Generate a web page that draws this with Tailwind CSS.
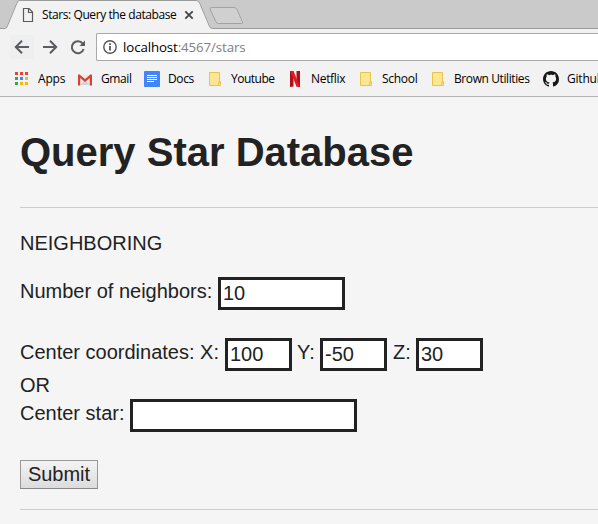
<!DOCTYPE html>
<html lang="en">
<head>
<meta charset="utf-8">
<title>Stars: Query the database</title>
<script src="https://cdn.jsdelivr.net/npm/@tailwindcss/browser@4"></script>
</head>
<body class="w-[598px] h-[524px] overflow-hidden bg-[#f5f5f5] text-[#222] font-['Liberation_Sans',Arial,sans-serif]">
<header class="relative h-[97px] bg-[#f2f2f2] border-b border-[#b6b4b6] text-xs text-black font-['Open_Sans','Noto_Sans',sans-serif]">
  <div class="relative h-[29px] bg-[#cacaca]">
    <svg class="absolute inset-0" width="598" height="29" viewBox="0 0 598 29" fill="none">
      <path d="M0 28.5H5Q6.5 28.5 7.3 26.5L17 3Q18 .5 20 .5H196Q198.500 .5 199.500 3L209 25.500Q210.300 28.500 212.500 28.500H598" stroke="#9b9b9b"/>
      <path d="M5 29Q7 28.500 7.800 26.500L17.500 3Q18.200 1 20 1H196Q198.200 1 199 3L208.500 25.500Q210 29 212 29Z" fill="#f2f2f2"/>
      <path d="M211.500 7.500H234Q236 7.500 237 9.500L242.500 22Q243 23.500 241.500 23.500H218.500Q216.500 23.500 215.700 21.500L210 9Q209.500 7.500 211.500 7.500Z" fill="#d0d0d0" stroke="#a3a3a3"/>
      <path d="M23.500 8.500H29L32.500 12V21.500H23.500ZM28.500 8.500V12.500H32.500" stroke="#5a5a5a" stroke-width="1.200"/>
      <path d="M185.300 11.300L192.700 18.700M192.700 11.300L185.300 18.700" stroke="#444" stroke-width="1.800"/>
    </svg>
    <div class="relative flex pl-[42px] pt-[6px] leading-[18px] whitespace-nowrap tracking-[-0.42px]">Stars: Query the database</div>
  </div>
  <div class="flex h-[36px] pt-[4px]">
    <div class="w-[96px] shrink-0">
      <svg width="96" height="28" viewBox="0 0 96 28" fill="none" stroke="#5a5d60" stroke-width="2">
        <rect x="10" y="2" width="24" height="24" rx="2" fill="#efefef" stroke="none"/>
        <path d="M29 14H16.500M22 7.800L15.800 14L22 20.200M43 14H55.500M50 7.800L56.200 14L50 20.200"/>
        <path d="M82.700 10.700A6 6 0 1 0 83.600 16"/>
        <path d="M85 7.500V13H79.500Z" fill="#5a5d60" stroke="none"/>
      </svg>
    </div>
    <div class="flex flex-1 h-[28px] border border-r-0 border-[#a9a9a9] rounded-l-[2px] bg-white">
      <svg class="ml-[6px] mt-[6px] shrink-0" width="14" height="14" viewBox="0 0 14 14" fill="none" stroke="#555">
        <circle cx="7" cy="7" r="6.200" stroke-width="1.400"/><path d="M7 6V10.500M7 3.300V5" stroke-width="1.800"/>
      </svg>
      <div class="ml-[6px] leading-[26px] text-[13.300px] whitespace-nowrap tracking-[-0.110px]">localhost<span class="text-[#808080]">:4567/stars</span></div>
    </div>
  </div>
  <nav class="flex h-[31px] pl-[15px] pt-[6px] leading-[16px] whitespace-nowrap overflow-hidden">
    <div class="flex shrink-0 w-[63px]"><div class="w-[23px] shrink-0"><svg class="mt-px" width="13" height="13" viewBox="0 0 13 13"><path d="M0 0h3v3H0zM5 0h3v3H5zM10 0h3v3h-3z" fill="#eb4132"/><path d="M0 5h3v3H0zM0 10h3v3H0z" fill="#31a853"/><path d="M5 5h3v3H5z" fill="#4285f4"/><path d="M10 5h3v3h-3zM5 10h3v3H5zM10 10h3v3h-3z" fill="#fbb903"/></svg></div><span class="tracking-[-0.200px]">Apps</span></div>
    <div class="flex shrink-0 w-[66px]"><div class="w-[23px] shrink-0"><svg class="mt-[3px]" width="14" height="12" viewBox="0 0 14 12"><path d="M1 1H13V11H1Z" fill="#e9e9e9"/><path d="M2 11L7 6L12 11" fill="#d4d4d4"/><path d="M0 1.200Q0 .3 1.200 .3L7 5L12.800 .3Q14 .3 14 1.200V11.500H11.800V4L7 8L2.200 4V11.500H0Z" fill="#d54235"/></svg></div><span class="tracking-[-0.400px]">Gmail</span></div>
    <div class="flex shrink-0 w-[65px]"><div class="w-[24px] shrink-0"><svg width="16" height="16" viewBox="0 0 16 16"><rect width="16" height="16" rx=".8" fill="#4285f4"/><path d="M3 4.500H13M3 6.500H13M3 8.500H13M3 10.500H10" stroke="#fff"/></svg></div><span class="tracking-[-0.360px]">Docs</span></div>
    <div class="flex shrink-0 w-[81px]"><div class="w-[22px] shrink-0"><svg class="mt-px" width="12" height="14" viewBox="0 0 12 14"><path d="M.5 .5H10.500V9.500H11.500V13.500H.5Z" fill="#ffe694" stroke="#e7c54a"/><path d="M9.500 13V10.500H11" fill="none" stroke="#e7c54a"/></svg></div><span class="tracking-[-0.500px]">Youtube</span></div>
    <div class="flex shrink-0 w-[70px]"><div class="w-[21px] shrink-0"><svg width="10" height="16" viewBox="0 0 10 16"><path d="M0 0H3.500V15.500L0 16ZM6.500 0H10V16L6.500 15.500Z" fill="#a9121b"/><path d="M0 0H3.500L10 16L6.500 15.500Z" fill="#e61923"/></svg></div><span class="tracking-[-0.320px]">Netflix</span></div>
    <div class="flex shrink-0 w-[72px]"><div class="w-[22px] shrink-0"><svg class="mt-px" width="12" height="14" viewBox="0 0 12 14"><path d="M.5 .5H10.500V9.500H11.500V13.500H.5Z" fill="#ffe694" stroke="#e7c54a"/><path d="M9.500 13V10.500H11" fill="none" stroke="#e7c54a"/></svg></div><span class="tracking-[-0.280px]">School</span></div>
    <div class="flex shrink-0 w-[111px]"><div class="w-[22px] shrink-0"><svg class="mt-px" width="12" height="14" viewBox="0 0 12 14"><path d="M.5 .5H10.500V9.500H11.500V13.500H.5Z" fill="#ffe694" stroke="#e7c54a"/><path d="M9.500 13V10.500H11" fill="none" stroke="#e7c54a"/></svg></div><span class="tracking-[-0.400px]">Brown Utilities</span></div>
    <div class="flex shrink-0"><div class="w-[24px] shrink-0"><svg width="16" height="16" viewBox="0 0 16 16" fill="#191717"><path d="M8 0C3.580 0 0 3.580 0 8c0 3.540 2.290 6.530 5.470 7.590.4.070.55-.17.55-.38 0-.19-.01-.82-.01-1.490-2.010.37-2.530-.49-2.690-.94-.09-.23-.48-.94-.82-1.130-.28-.15-.68-.52-.01-.53.63-.01 1.080.58 1.230.82.72 1.210 1.870.87 2.330.66.070-.52.280-.87.510-1.070-1.780-.2-3.640-.89-3.640-3.950 0-.87.310-1.590.82-2.150-.08-.2-.36-1.020.08-2.120 0 0 .67-.21 2.200.82.64-.18 1.320-.27 2-.27s1.360.09 2 .27c1.530-1.040 2.200-.82 2.200-.82.44 1.100.16 1.920.08 2.120.51.56.82 1.270.82 2.150 0 3.070-1.870 3.750-3.650 3.950.29.25.54.73.54 1.480 0 1.070-.01 1.930-.01 2.200 0 .21.150.46.550.38A8 8 0 0 0 16 8c0-4.420-3.580-8-8-8Z"/></svg></div><span class="tracking-[-0.200px]">Github</span></div>
  </nav>
</header>
<main class="pl-5 text-[20px] leading-[23px] whitespace-nowrap">
  <h1 class="pt-[32px] h-[110px] text-[40px] leading-[46px] font-bold">Query Star Database</h1>
  <hr class="border-[#ccc]">
  <p class="pt-[24px] h-[69px]">NEIGHBORING</p>
  <form>
    <div class="flex h-[61px]"><label class="w-[198px] pt-[3px]">Number of neighbors:</label><input class="w-[127px] h-[33px] border-3 border-[#222] bg-white pl-[2px] pb-px leading-[23px]" value="10"></div>
    <div class="flex h-[35px]">
      <label class="w-[205px] pt-[3px]">Center coordinates: X:</label><input class="w-[67px] h-[33px] border-3 border-[#222] bg-white pl-[2px] pb-px leading-[23px]" value="100">
      <label class="w-[28px] pl-[5px] pt-[3px]">Y:</label><input class="w-[67px] h-[33px] border-3 border-[#222] bg-white pl-[2px] pb-px leading-[23px]" value="-50">
      <label class="w-[29px] pl-[6px] pt-[3px]">Z:</label><input class="w-[67px] h-[33px] border-3 border-[#222] bg-white pl-[2px] pb-px leading-[23px]" value="30">
    </div>
    <p class="h-[26px] pt-px">OR</p>
    <div class="flex h-[61px]"><label class="w-[110px] pt-[3px]">Center star:</label><input class="w-[227px] h-[33px] border-3 border-[#222] bg-white" value=""></div>
    <button type="button" class="block w-[78px] h-[29px] border border-[#999] border-b-[#888] bg-linear-to-b from-[#f4f4f4] to-[#dcdcdc] leading-[27px]">Submit</button>
  </form>
  <hr class="mt-[20px] border-[#ccc]">
</main>
</body>
</html>
